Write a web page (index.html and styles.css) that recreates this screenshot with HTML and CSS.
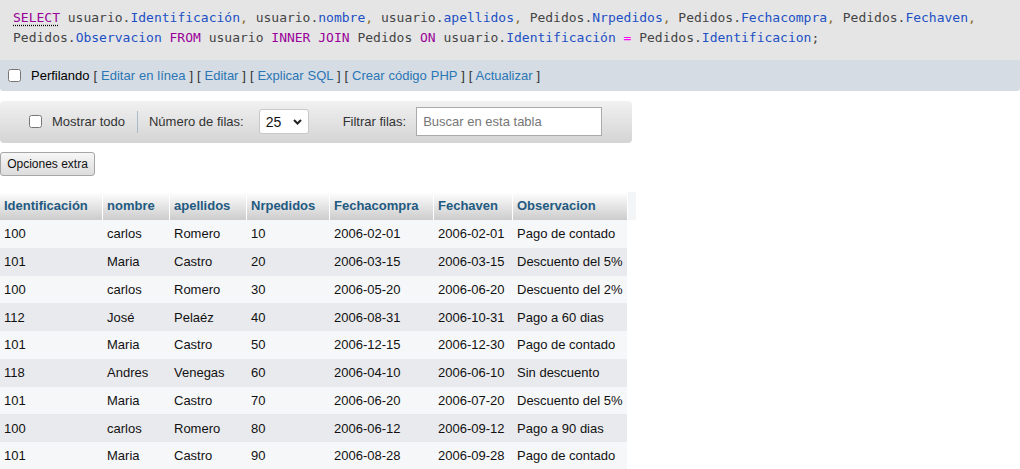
FILE: index.html
```html
<!DOCTYPE html>
<html lang="es">
<head>
<meta charset="utf-8">
<title>Resultado SQL</title>
<link rel="stylesheet" href="styles.css">
</head>
<body>
<div class="sql-box">
  <code class="sql"><a class="kw doc">SELECT</a> usuario.<span class="fld">Identificación</span><span class="pn">,</span> usuario.<span class="fld">nombre</span><span class="pn">,</span> usuario.<span class="fld">apellidos</span><span class="pn">,</span> Pedidos.<span class="fld">Nrpedidos</span><span class="pn">,</span> Pedidos.<span class="fld">Fechacompra</span><span class="pn">,</span> Pedidos.<span class="fld">Fechaven</span><span class="pn">,</span> Pedidos.<span class="fld">Observacion</span> <span class="kw">FROM</span> usuario <span class="kw">INNER</span> <span class="kw">JOIN</span> Pedidos <span class="kw">ON</span> usuario.<span class="fld">Identificación</span> <span class="op">=</span> Pedidos.<span class="fld">Identificacion</span>;</code>
</div>

<div class="tools">
  <label class="profiling"><input type="checkbox" class="cb">Perfilando</label>
  <span class="links">[ <a>Editar en línea</a> ] [ <a>Editar</a> ] [ <a>Explicar SQL</a> ] [ <a>Crear código PHP</a> ] [ <a>Actualizar</a> ]</span>
</div>

<div class="navbar">
  <label class="showall"><input type="checkbox" class="cb">Mostrar todo</label>
  <span class="sep"></span>
  <span class="lbl">Número de filas:</span>
  <span class="select">25<svg class="chev" width="9" height="6" viewBox="0 0 9 6"><path d="M1 1l3.5 3.5L8 1" fill="none" stroke="#222" stroke-width="2"/></svg></span>
  <span class="lbl filter-lbl">Filtrar filas:</span>
  <input class="filter" type="text" placeholder="Buscar en esta tabla">
</div>

<button class="btn">Opciones extra</button>

<table class="data">
  <colgroup>
    <col class="c1"><col class="c2"><col class="c3"><col class="c4"><col class="c5"><col class="c6"><col class="c7"><col class="c8">
  </colgroup>
  <thead>
    <tr>
      <th>Identificación</th><th>nombre</th><th>apellidos</th><th>Nrpedidos</th><th>Fechacompra</th><th>Fechaven</th><th>Observacion</th><th class="blank"></th>
    </tr>
  </thead>
  <tbody>
    <tr><td>100</td><td>carlos</td><td>Romero</td><td>10</td><td>2006-02-01</td><td>2006-02-01</td><td>Pago de contado</td></tr>
    <tr><td>101</td><td>Maria</td><td>Castro</td><td>20</td><td>2006-03-15</td><td>2006-03-15</td><td>Descuento del 5%</td></tr>
    <tr><td>100</td><td>carlos</td><td>Romero</td><td>30</td><td>2006-05-20</td><td>2006-06-20</td><td>Descuento del 2%</td></tr>
    <tr><td>112</td><td>José</td><td>Pelaéz</td><td>40</td><td>2006-08-31</td><td>2006-10-31</td><td>Pago a 60 dias</td></tr>
    <tr><td>101</td><td>Maria</td><td>Castro</td><td>50</td><td>2006-12-15</td><td>2006-12-30</td><td>Pago de contado</td></tr>
    <tr><td>118</td><td>Andres</td><td>Venegas</td><td>60</td><td>2006-04-10</td><td>2006-06-10</td><td>Sin descuento</td></tr>
    <tr><td>101</td><td>Maria</td><td>Castro</td><td>70</td><td>2006-06-20</td><td>2006-07-20</td><td>Descuento del 5%</td></tr>
    <tr><td>100</td><td>carlos</td><td>Romero</td><td>80</td><td>2006-06-12</td><td>2006-09-12</td><td>Pago a 90 dias</td></tr>
    <tr><td>101</td><td>Maria</td><td>Castro</td><td>90</td><td>2006-08-28</td><td>2006-09-28</td><td>Pago de contado</td></tr>
  </tbody>
</table>
</body>
</html>
```

FILE: styles.css
```css
body {
  margin: 0;
  font-family: "Liberation Sans", Arial, sans-serif;
  font-size: 13px;
  color: #333;
  background: #fff;
}

/* SQL query box */
.sql-box {
  background: #e5e5e5;
  height: 60px;
  box-sizing: border-box;
  padding: 8px 13px 0;
}
.sql {
  font-family: "DejaVu Sans Mono", "Liberation Mono", monospace;
  font-size: 13px;
  line-height: 20px;
  color: #444;
}
.sql .kw { color: #990099; }
.sql .doc { text-decoration: underline dotted #000; text-underline-offset: 3px; }
.sql .fld { color: #2150c4; }
.sql .op { color: #ff00ff; }
.sql .pn { color: #8a6a2a; }

/* profiling / actions bar */
.tools {
  display: flex;
  align-items: center;
  height: 31px;
  background: #d5dce3;
  border-radius: 0 0 3px 3px;
  padding-left: 8px;
  color: #222;
}
.cb {
  margin: 0;
  width: 13px;
  height: 13px;
}
.profiling {
  display: flex;
  align-items: center;
  color: #000;
}
.profiling .cb { margin-right: 10px; }
.links {
  margin-left: 4px;
  color: #333;
  white-space: pre;
  word-spacing: 0.3px;
}
.links a {
  color: #2b76b5;
  text-decoration: none;
}

/* navigation toolbar */
.navbar {
  display: flex;
  align-items: center;
  width: 632px;
  height: 42px;
  margin-top: 10px;
  box-sizing: border-box;
  padding: 0 0 1px 29px;
  border-radius: 4px;
  background: linear-gradient(#f1f1f1, #d4d4d4);
  color: #333;
}
.showall {
  display: flex;
  align-items: center;
}
.showall .cb { margin-right: 10px; }
.sep {
  width: 1px;
  height: 22px;
  margin: 0 11px 0 12px;
  background: #a9bccb;
}
.select {
  display: flex;
  align-items: center;
  justify-content: space-between;
  box-sizing: border-box;
  width: 50px;
  height: 25px;
  margin-left: 15px;
  padding: 0 6px 0 6px;
  background: #fff;
  border: 1px solid #c8c8c8;
  border-radius: 3px;
  color: #111;
  font-size: 14px;
}
.filter-lbl { margin-left: 34px; }
.filter {
  box-sizing: border-box;
  width: 186px;
  height: 29px;
  margin: 0 0 0 10px;
  padding: 0 6px;
  border: 1px solid #aaa;
  border-radius: 0;
  font-family: "Liberation Sans", Arial, sans-serif;
  font-size: 13px;
  background: #fff;
}
.filter::placeholder { color: #767676; }

/* extra options button */
.btn {
  display: block;
  margin-top: 9px;
  width: 95px;
  height: 24px;
  padding: 0;
  font-family: "Liberation Sans", Arial, sans-serif;
  font-size: 12px;
  color: #111;
  background: linear-gradient(#f7f7f7, #dcdcdc);
  border: 1px solid #a6a6a6;
  border-radius: 3px;
}

/* results table */
.data {
  margin-top: 16px;
  border-collapse: separate;
  border-spacing: 0;
  table-layout: fixed;
  width: 636px;
}
.c1 { width: 102px; }
.c2 { width: 67px; }
.c3 { width: 77px; }
.c4 { width: 83px; }
.c5 { width: 104px; }
.c6 { width: 79px; }
.c7 { width: 115px; }
.c8 { width: 9px; }

.data th,
.data td {
  box-sizing: border-box;
  padding: 0 4px;
  text-align: left;
  vertical-align: middle;
  white-space: nowrap;
  border-left: 1px solid transparent;
}
.data th:first-child,
.data td:first-child { border-left: 0; }
.data th {
  height: 28px;
  padding-bottom: 1px;
  font-weight: bold;
  color: #235a81;
  background: linear-gradient(#ffffff, #cccccc);
  border-left-color: #fff;
}
.data th.blank {
  background: #f4f5f7;
  padding: 0;
}
.data td {
  height: 27.75px;
  color: #111;
}
.data tbody tr:nth-child(odd) td { background: #f6f7f9; }
.data tbody tr:nth-child(even) td { background: #e9eaed; }
```
